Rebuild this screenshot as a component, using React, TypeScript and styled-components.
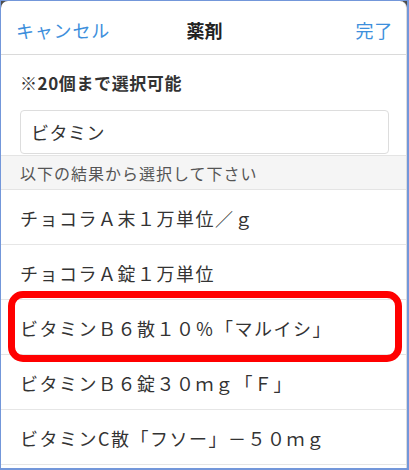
import styled, { createGlobalStyle } from 'styled-components';

const GlobalStyle = createGlobalStyle`
  html, body {
    margin: 0;
    padding: 0;
    background: #ffffff;
  }
  * {
    box-sizing: border-box;
  }
`;

const Frame = styled.div`
  width: 409px;
  height: 470px;
  background: #4d4d4d;
  border-style: solid;
  border-color: #7397da;
  border-width: 1px 2px 2px 1px;
  overflow: hidden;
  font-family: 'Noto Sans CJK JP', 'Noto Sans', sans-serif;
`;

const Modal = styled.div`
  height: 100%;
  background: #ffffff;
  border-radius: 7px 7px 0 0;
  overflow: hidden;
  border-right: 1px solid #dcdcdc;
`;

const Header = styled.div`
  height: 54px;
  display: flex;
  align-items: center;
  justify-content: space-between;
  padding: 4px 13px 0 15px;
  border-bottom: 1px solid #dadada;
`;

const NavButton = styled.span`
  color: #3d8fdc;
  font-size: 18px;
  letter-spacing: 0.8px;
  width: 96px;
  text-align: ${(props: { $align: 'left' | 'right' }) => props.$align};
`;

const Title = styled.span`
  color: #222;
  font-size: 18px;
  font-weight: 700;
`;

const Body = styled.div`
  padding: 18px 17px 0 19px;
`;

const Note = styled.div`
  color: #333;
  font-size: 17px;
  font-weight: 700;
  line-height: 20px;
  letter-spacing: 0.6px;
`;

const SearchInput = styled.div`
  margin-top: 17px;
  height: 44px;
  border: 1px solid #dddddd;
  border-radius: 4px;
  padding: 0 10px;
  display: flex;
  align-items: center;
  font-size: 18px;
  color: #333;
  letter-spacing: 0.5px;
`;

const SectionHeader = styled.div`
  margin-top: 1px;
  height: 35px;
  background: #f5f5f5;
  border-top: 1px solid #e4e4e4;
  border-bottom: 1px solid #e4e4e4;
  display: flex;
  align-items: center;
  padding-left: 19px;
  color: #555;
  font-size: 16px;
  letter-spacing: 1px;
`;

const Item = styled.div`
  position: relative;
  height: 55px;
  border-bottom: 1px solid #e6e6e6;
  display: flex;
  align-items: center;
  padding: 1px 0 0 19px;
  color: #333;
  font-size: 18px;
  letter-spacing: 1.5px;
`;

const Highlight = styled.div`
  position: absolute;
  left: 7px;
  right: 4px;
  top: -9px;
  bottom: -8px;
  border: 7px solid #ff0000;
  border-radius: 15px;
  pointer-events: none;
`;

const items = [
  'チョコラＡ末１万単位／ｇ',
  'チョコラＡ錠１万単位',
  'ビタミンＢ６散１０％「マルイシ」',
  'ビタミンＢ６錠３０ｍｇ「Ｆ」',
  'ビタミンC散「フソー」－５０ｍｇ',
];

export default function App() {
  return (
    <>
      <GlobalStyle />
      <Frame>
        <Modal>
          <Header>
            <NavButton $align="left">キャンセル</NavButton>
            <Title>薬剤</Title>
            <NavButton $align="right">完了</NavButton>
          </Header>
          <Body>
            <Note>※20個まで選択可能</Note>
            <SearchInput>ビタミン</SearchInput>
          </Body>
          <SectionHeader>以下の結果から選択して下さい</SectionHeader>
          {items.map((name, i) => (
            <Item key={i}>
              {name}
              {i === 2 && <Highlight />}
            </Item>
          ))}
        </Modal>
      </Frame>
    </>
  );
}
